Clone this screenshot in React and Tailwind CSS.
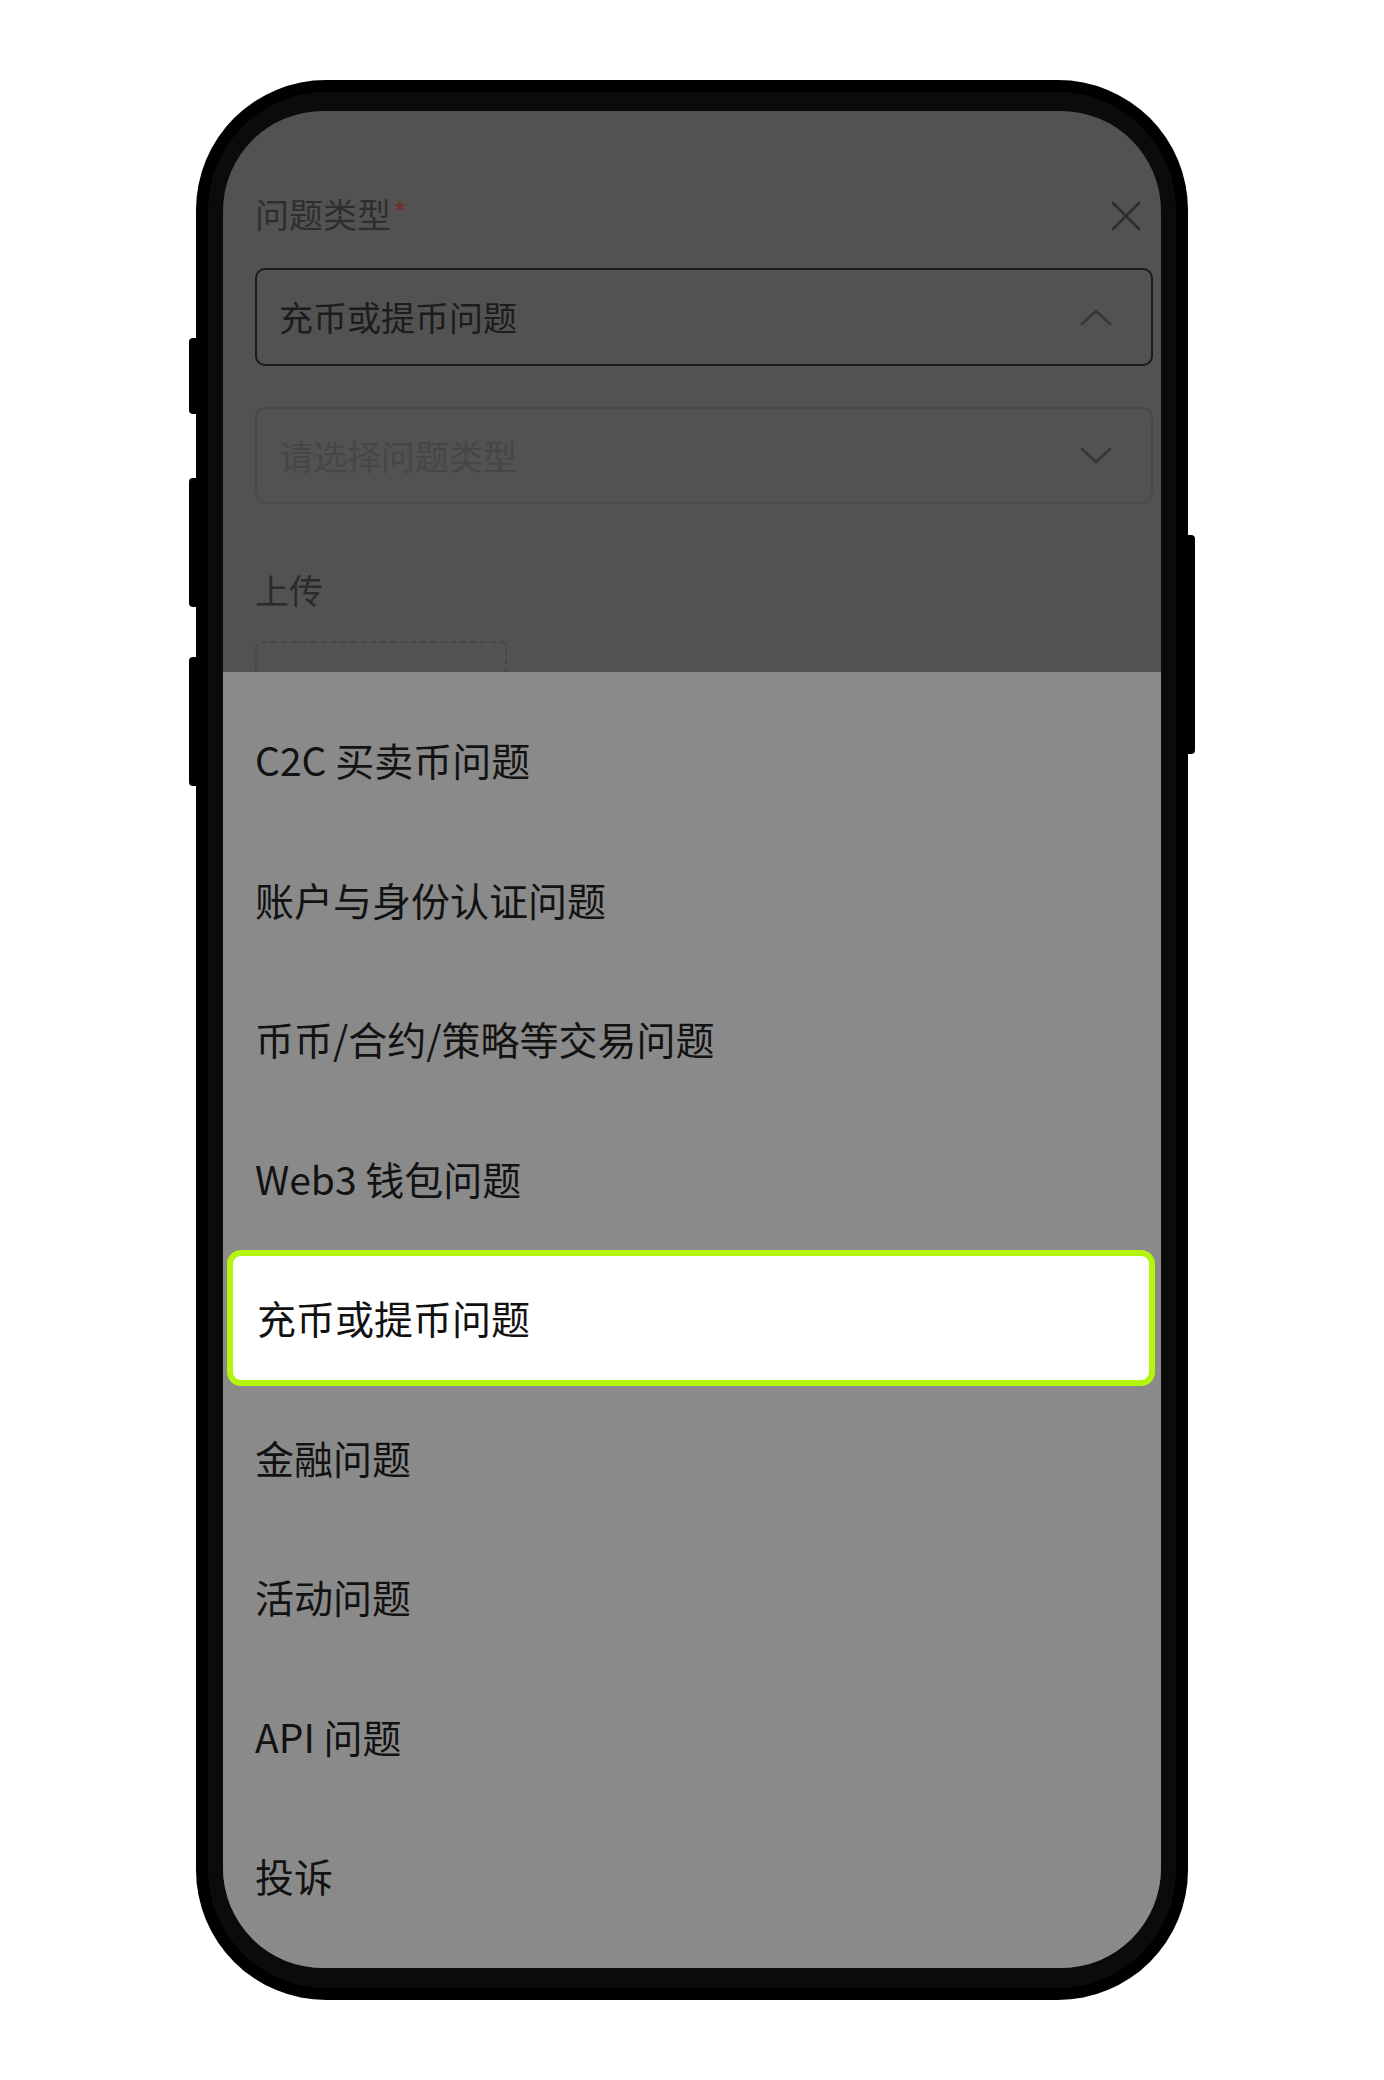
import React from 'react';

const options = [
    'C2C 买卖币问题',
    '账户与身份认证问题',
    '币币/合约/策略等交易问题',
    'Web3 钱包问题',
    '充币或提币问题',
    '金融问题',
    '活动问题',
    'API 问题',
    '投诉',
];

const selected = '充币或提币问题';

const Chevron = ({ up }) => (
    <svg width="32" height="18" viewBox="0 0 32 18" fill="none">
        <polyline
            points={up ? '2,16 16,3 30,16' : '2,2 16,15 30,2'}
            stroke="#373737"
            strokeWidth="2.6"
            strokeLinecap="round"
            strokeLinejoin="round"
        />
    </svg>
);

const CloseIcon = () => (
    <svg width="30" height="30" viewBox="0 0 30 30" fill="none">
        <path d="M2 2L28 28M28 2L2 28" stroke="#2d2d2d" strokeWidth="2.6" strokeLinecap="round" />
    </svg>
);

const App = () => {
    return (
        <div className="w-full h-[2080px] bg-white flex justify-center pt-[80px] font-['Noto_Sans_CJK_SC','Noto_Sans',sans-serif]">
            <div className="relative w-[992px] h-[1920px] rounded-[130px] bg-black p-[12px]">
                {/* side buttons */}
                <div className="absolute left-[-7px] top-[258px] w-[8px] h-[76px] rounded-l-[4px] bg-black" />
                <div className="absolute left-[-7px] top-[398px] w-[8px] h-[129px] rounded-l-[4px] bg-black" />
                <div className="absolute left-[-7px] top-[577px] w-[8px] h-[129px] rounded-l-[4px] bg-black" />
                <div className="absolute right-[-7px] top-[455px] w-[8px] h-[219px] rounded-r-[4px] bg-black" />

                <div className="h-full rounded-[118px] bg-[#0b0b0b] px-[15px] pt-[19px] pb-[20px]">
                    <div className="relative h-full rounded-[100px] overflow-hidden bg-[#525252] pl-[32px] pr-[8px]">
                        {/* dimmed form */}
                        <div className="flex items-center justify-between h-[60px] mt-[73px]">
                            <div className="flex items-start text-[34px] leading-none text-[#2e2e2e]">
                                问题类型<span className="ml-[2px] text-[30px] leading-none text-[#742c2c]">*</span>
                            </div>
                            <div className="mr-[12px] mt-[4px]">
                                <CloseIcon />
                            </div>
                        </div>

                        <div className="mt-[24px] h-[98px] rounded-[10px] border-2 border-[#1a1a1a] flex items-center justify-between pl-[22px] pr-[39px]">
                            <span className="text-[34px] leading-none text-[#1c1c1c]">充币或提币问题</span>
                            <Chevron up />
                        </div>

                        <div className="mt-[41px] h-[97px] rounded-[10px] border-2 border-[#4a4a4a] flex items-center justify-between pl-[22px] pr-[39px]">
                            <span className="text-[34px] leading-none text-[#464646]">请选择问题类型</span>
                            <Chevron />
                        </div>

                        <div className="mt-[69px] text-[34px] leading-none text-[#2b2b2b]">上传</div>

                        <div className="mt-[34px] w-[252px] h-[240px] rounded-[6px] border-2 border-dashed border-[#474747]" />

                        {/* option sheet */}
                        <div className="absolute left-0 right-0 top-[561px] bottom-0 bg-[#8a8a8a] pt-[18px]">
                            {options.map(opt =>
                                opt === selected ? (
                                    <div key={opt} className="h-[139.5px] py-[2px] pl-[4px] pr-[6px]">
                                        <div className="h-full rounded-[14px] border-[6px] border-[#b3f50e] bg-white flex items-center pl-[24px]">
                                            <span className="text-[39px] leading-none text-[#111]">{opt}</span>
                                        </div>
                                    </div>
                                ) : (
                                    <div key={opt} className="h-[139.5px] flex items-center pl-[32px]">
                                        <span className="text-[39px] leading-none text-[#121212]">{opt}</span>
                                    </div>
                                )
                            )}
                        </div>
                    </div>
                </div>
            </div>
        </div>
    );
};

export default App;
